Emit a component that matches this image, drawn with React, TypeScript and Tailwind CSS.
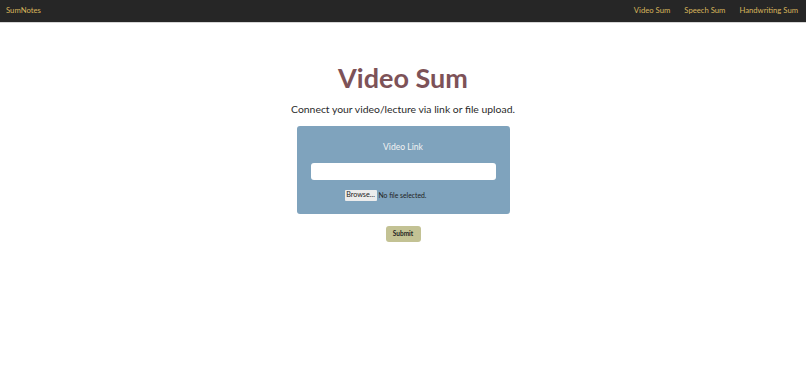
import React from "react";

export default function App() {
  return (
    <div className="min-h-[389px] w-full bg-white" style={{ fontFamily: "Lato, 'Open Sans', sans-serif" }}>
      <nav className="flex h-[23px] items-center justify-between border-b border-[#d6d6d6] bg-[#262626] pl-[6px] pr-[8px] text-[7.7px] text-[#d8b55c]">
        <span>SumNotes</span>
        <div className="flex gap-[14px]">
          <span>Video Sum</span>
          <span>Speech Sum</span>
          <span>Handwriting Sum</span>
        </div>
      </nav>
      <main className="flex flex-col items-center">
        <h1 className="mt-[38px] text-[27px] font-bold leading-[34px] text-[#7d5258]">Video Sum</h1>
        <p className="mt-[7px] text-[10.4px] leading-[14px] text-[#2a2a2a]">Connect your video/lecture via link or file upload.</p>
        <div className="mt-[10px] flex h-[88px] w-[213px] flex-col items-center rounded-[3px] bg-[#7fa3bd]">
          <label className="mt-[16px] text-[8.6px] leading-[11px] text-[#f2f2f2]">Video Link</label>
          <input className="mt-[10px] h-[17px] w-[185px] rounded-[3px] bg-white outline-none" />
          <div className="ml-[48px] mt-[10px] flex items-center gap-[2px] self-start text-[6.8px] text-[#222]">
            <span className="flex h-[11px] w-[32px] items-center justify-center rounded-[1px] bg-[#ececec] text-[7.2px]">Browse...</span>
            <span>No file selected.</span>
          </div>
        </div>
        <button className="mt-[12px] h-[16px] w-[35px] rounded-[3px] bg-[#c3c294] text-[6.5px] font-bold text-[#222]">Submit</button>
      </main>
    </div>
  );
}
